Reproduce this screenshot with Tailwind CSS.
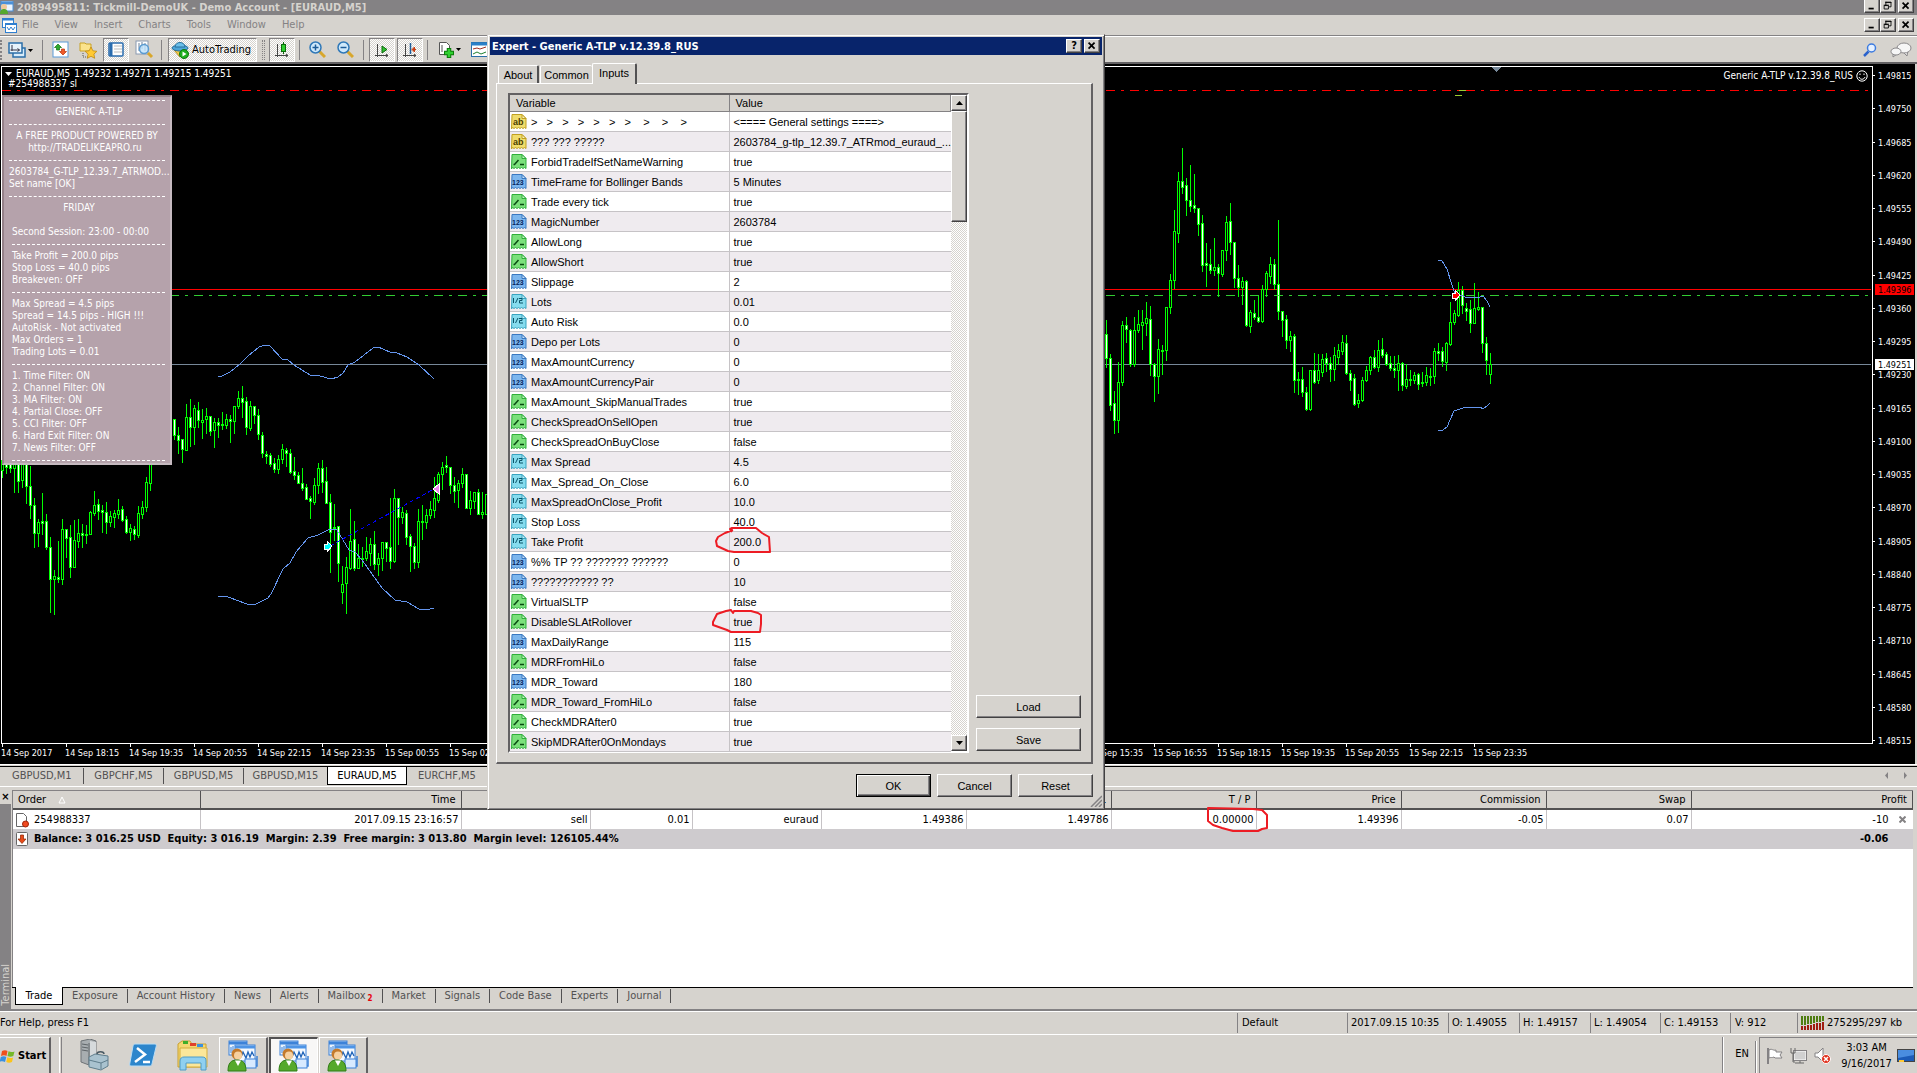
<!DOCTYPE html>
<html lang="en">
  <head>
    <meta charset="UTF-8" />
    <meta name="viewport" content="width=device-width, initial-scale=1.0" />
    <title>2089495811: Tickmill-DemoUK - Demo Account - [EURAUD,M5]</title>
    <script src="https://cdn.jsdelivr.net/npm/@tailwindcss/browser@4"></script>
  </head>
  <body class="relative flex min-h-screen flex-col overflow-hidden bg-[#d6d3ce] font-['DejaVu_Sans_Condensed','Noto_Sans',sans-serif] text-[11px] leading-[14px] text-black">
    <!-- Shared icons -->
    <svg class="hidden">
      <defs>
        <symbol id="page" viewBox="0 0 16 16">
          <path d="M1 .5h10l4 4v10l-1.500-1-1.500 1-1.500-1-1.500 1-1.500-1-1.500 1-1.500-1-1.500 1-1.500-1L.5 15z" />
          <path d="M11 .5v4h4z" fill="#fff" fill-opacity=".6" />
        </symbol>
        <symbol id="i-ab" viewBox="0 0 16 16">
          <use href="#page" fill="#f0dc6c" stroke="#c0a020" />
          <text x="2" y="11" font-size="9" font-weight="bold" fill="#4a3c00">ab</text>
        </symbol>
        <symbol id="i-bool" viewBox="0 0 16 16">
          <use href="#page" fill="#7be07b" stroke="#2fae3a" />
          <path d="M2.500 10.500h1l4-4.500M9 10.500h4" stroke="#084a10" stroke-width="1.500" fill="none" />
        </symbol>
        <symbol id="i-int" viewBox="0 0 16 16">
          <use href="#page" fill="#7db6ee" stroke="#3a78c0" />
          <text x="1" y="11" font-size="7" font-weight="bold" fill="#06245a">123</text>
        </symbol>
        <symbol id="i-dbl" viewBox="0 0 16 16">
          <use href="#page" fill="#86dcee" stroke="#39a3bf" />
          <path d="M2.500 4v5M4.500 9l2.500-5M8 4.500h3v2H8.500V9H12" stroke="#0b5468" fill="none" />
        </symbol>
        <symbol id="i-min" viewBox="0 0 16 14"><path d="M4 9h6v2H4z" /></symbol>
        <symbol id="i-restore" viewBox="0 0 16 14">
          <path d="M5.500 2v5M5 2.500h6.500V8H9M5 3h7M3.500 6.500h5v4h-5zM3 6h6" fill="none" stroke="#000" />
        </symbol>
        <symbol id="i-close" viewBox="0 0 16 14"><path d="M4 3l7 7M11 3l-7 7" stroke="#000" stroke-width="2" /></symbol>
        <symbol id="i-task" viewBox="0 0 32 32">
          <rect x="2" y="1" width="18" height="14" fill="#eaf4ff" stroke="#3c82d8" />
          <path d="M2 3h18" stroke="#3c82d8" stroke-width="3" />
          <path d="M4 7v6M6 6v5" stroke="#3c82d8" />
          <rect x="8" y="5" width="20" height="16" fill="#f4f9ff" stroke="#3c82d8" />
          <path d="M8 7h20" stroke="#4d94e6" stroke-width="3" />
          <path d="M14 17l2-5 3 6 2-6 2 5 2-5 2 4" stroke="#1f63b8" fill="none" stroke-width="1.300" />
          <path d="M19 24h10M30 16v10h-9" stroke="#3c82d8" fill="none" stroke-width="1.500" />
          <rect x="18" y="19" width="11" height="9" fill="#d8eaff" stroke="#3c82d8" />
          <circle cx="10" cy="14" r="5.500" fill="#c47a2c" />
          <circle cx="11" cy="15.500" r="4" fill="#f6d0a0" />
          <path d="M1 31c0-8 3-11 9-11s9 3 9 11z" fill="#55a92c" stroke="#2f7d14" />
          <path d="M8 20.500l3 5.500 3-5.500z" fill="#fff" />
        </symbol>
      </defs>
    </svg>

    <!-- Title bar -->
    <header class="flex h-[15px] items-center overflow-hidden bg-[#848284] pr-[3px] text-[#d6d3ce]">
      <svg class="mr-[3px] size-[14px]" viewBox="0 0 14 14">
        <rect x="1" width="12" height="10" fill="#eaf4ff" stroke="#4a90d8" />
        <path d="M1 2h12" stroke="#4a90d8" stroke-width="3" />
        <circle cx="4" cy="6" r="3" fill="#f0c89a" />
        <path d="M0 13c0-4 2-5 4-5s4 1 4 5z" fill="#55a92c" />
      </svg>
      <h1 class="flex-1 text-[11px] font-bold">2089495811: Tickmill-DemoUK - Demo Account - [EURAUD,M5]</h1>
      <div class="flex h-[13px] self-start">
        <button aria-label="Minimize" class="h-[13px] w-4 border border-t-0 border-white border-r-[#424142] border-b-[#424142] bg-[#d6d3ce] shadow-[inset_-1px_-1px_#848284]"><svg class="h-3 w-[14px]"><use href="#i-min" /></svg></button>
        <button aria-label="Restore" class="h-[13px] w-4 border border-t-0 border-white border-r-[#424142] border-b-[#424142] bg-[#d6d3ce] shadow-[inset_-1px_-1px_#848284]"><svg class="h-3 w-[14px]"><use href="#i-restore" /></svg></button>
        <button aria-label="Close" class="ml-0.5 h-[13px] w-4 border border-t-0 border-white border-r-[#424142] border-b-[#424142] bg-[#d6d3ce] shadow-[inset_-1px_-1px_#848284]"><svg class="h-3 w-[14px]"><use href="#i-close" /></svg></button>
      </div>
    </header>

    <!-- Menu -->
    <nav class="flex h-[21px] items-center border-b border-[#848284] pr-[3px] text-[#848284]">
      <svg class="mr-[5px] ml-0.5 size-[15px] flex-none" viewBox="0 0 15 15">
        <rect x=".5" y=".5" width="11" height="9" fill="#fff" stroke="#2f7fd0" />
        <path d="M0 1.500h12" stroke="#2f7fd0" stroke-width="2" />
        <rect x="3.500" y="5.500" width="11" height="9" fill="#fff" stroke="#2f7fd0" />
        <path d="M3 6.500h12M5 9l2 3 2-3 2 3 2-3" stroke="#2f7fd0" fill="none" />
      </svg>
      <div class="flex flex-1 gap-[16px]">
        <a href="#">File</a><a href="#">View</a><a href="#">Insert</a><a href="#">Charts</a><a href="#">Tools</a><a href="#">Window</a><a href="#">Help</a>
      </div>
      <button aria-label="Minimize chart" class="h-[14px] w-4 border border-white border-r-[#424142] border-b-[#424142] shadow-[inset_-1px_-1px_#848284]"><svg class="h-3 w-[14px]"><use href="#i-min" /></svg></button>
      <button aria-label="Restore chart" class="h-[14px] w-4 border border-white border-r-[#424142] border-b-[#424142] shadow-[inset_-1px_-1px_#848284]"><svg class="h-3 w-[14px]"><use href="#i-restore" /></svg></button>
      <button aria-label="Close chart" class="ml-0.5 h-[14px] w-4 border border-white border-r-[#424142] border-b-[#424142] shadow-[inset_-1px_-1px_#848284]"><svg class="h-3 w-[14px]"><use href="#i-close" /></svg></button>
    </nav>

    <!-- Toolbar -->
    <div class="flex h-[28px] items-center border-t border-b-2 border-t-white border-b-[#636163]">
      <span class="h-5 w-0.5 border-l-2 border-dotted border-[#848284]"></span>
      <button aria-label="New chart" class="ml-[6px]">
        <svg class="h-[18px] w-[26px]" viewBox="0 0 26 18">
          <rect x="5" y="7" width="12" height="9" fill="#d8ecfa" stroke="#2a6ea8" stroke-width="1.500" />
          <rect x="1" y="2" width="13" height="10" fill="#e6f3fc" stroke="#2a6ea8" stroke-width="1.500" />
          <path d="M4 4v6M2.500 9h9M9.500 7.500l2 1.500-2 1.500" stroke="#334" fill="none" />
          <path d="M20 8h5l-2.500 3z" />
        </svg>
      </button>
      <span class="ml-2 h-5 w-px bg-[#848284]"></span>
      <button aria-label="Market watch" class="ml-[9px]">
        <svg class="size-[17px]" viewBox="0 0 17 17">
          <rect x="1" y="1" width="15" height="15" fill="#fff" stroke="#5a9bd8" />
          <path d="M6 3l3.500 3.500h-2V9h-3V6.500h-2z" fill="#2eab2e" stroke="#137213" stroke-width=".7" />
          <path d="M11 14l3.500-3.500h-2V8h-3v2.500h-2z" fill="#f05a28" stroke="#b83208" stroke-width=".7" />
        </svg>
      </button>
      <button aria-label="Navigator" class="ml-[10px]">
        <svg class="size-[18px]" viewBox="0 0 18 18">
          <path d="M1 2h5l1 1h5v7H1z" fill="#fbe38c" stroke="#c9a227" />
          <path d="M4 12v4h5" stroke="#555" stroke-dasharray="1 1" fill="none" />
          <path d="M12 6l1.900 3.800 4 .5-3 2.800.8 4.200-3.700-2-3.700 2 .8-4.200-3-2.800 4-.5z" fill="#ffc933" stroke="#c08a10" stroke-width=".8" />
        </svg>
      </button>
      <button aria-label="Terminal" class="ml-[6px] flex h-6 w-[26px] items-center justify-center border border-[#848284] border-r-white border-b-white bg-[repeating-conic-gradient(#fff_0_25%,#d6d3ce_0_50%)] bg-[length:2px_2px]">
        <svg class="h-[15px] w-4" viewBox="0 0 16 15">
          <rect x="1" y="1" width="14" height="13" rx="1" fill="#fff" stroke="#2a6cae" stroke-width="1.500" />
          <path d="M3 1v13" stroke="#2a6cae" stroke-width="3" />
          <path d="M6 4h8M6 7h8M6 10h8" stroke="#bbb" />
        </svg>
      </button>
      <button aria-label="Strategy tester" class="ml-[6px]">
        <svg class="size-[19px]" viewBox="0 0 19 19">
          <rect x="1" y="1" width="12" height="13" fill="#fff" stroke="#8a9ab0" />
          <path d="M4 3v8M7 2v7M10 3v8" stroke="#68809c" />
          <circle cx="9" cy="9" r="4.500" fill="#bfe2fb" fill-opacity=".8" stroke="#5b9bd0" stroke-width="1.500" />
          <path d="M13 13l4 4" stroke="#d8a72c" stroke-width="3" />
        </svg>
      </button>
      <span class="ml-[7px] h-5 w-px bg-[#848284]"></span>
      <button class="ml-[6px] flex h-6 w-[89px] items-center gap-[3px] border border-[#848284] border-r-white border-b-white bg-[repeating-conic-gradient(#fff_0_25%,#d6d3ce_0_50%)] bg-[length:2px_2px] pl-[2px]">
        <svg class="size-[18px] flex-none" viewBox="0 0 18 18">
          <path d="M3 9l6 7 6-7z" fill="#f2c84a" stroke="#b58a12" />
          <ellipse cx="9" cy="7" rx="8" ry="3" fill="#4ea6d8" stroke="#256f9c" />
          <path d="M4 6c0-6 10-6 10 0z" fill="#6cc0ea" stroke="#256f9c" />
          <circle cx="13" cy="13" r="4.500" fill="#1fae1f" stroke="#0b7a0b" />
          <path d="M11.500 10.500l4 2.500-4 2.500z" fill="#fff" />
        </svg>
        AutoTrading
      </button>
      <span class="ml-[5px] h-5 w-[3px] border-x border-dotted border-[#848284]"></span>
      <button aria-label="Candlesticks" class="ml-[4px] flex h-6 w-[26px] items-center justify-center border border-[#848284] border-r-white border-b-white bg-[repeating-conic-gradient(#fff_0_25%,#d6d3ce_0_50%)] bg-[length:2px_2px]">
        <svg class="size-4" viewBox="0 0 16 16">
          <path d="M3.500 2v13M1 13.500h13M12 12l2 1.500-2 1.500" stroke="#444" fill="none" />
          <path d="M9.500 0v12" stroke="#0a6a0a" />
          <rect x="7.500" y="2.500" width="4" height="7" fill="#2fd02f" stroke="#0a6a0a" />
        </svg>
      </button>
      <span class="ml-1 h-5 w-px bg-[#848284]"></span>
      <button aria-label="Zoom in" class="ml-[9px]">
        <svg class="size-[17px]" viewBox="0 0 17 17">
          <path d="M10 10l6 6" stroke="#d8a72c" stroke-width="3" />
          <circle cx="6.500" cy="6.500" r="5.500" fill="#cfe9fb" stroke="#2f78b8" stroke-width="1.500" />
          <path d="M3.500 6.500h6M6.500 3.500v6" stroke="#1d5c98" stroke-width="1.500" />
        </svg>
      </button>
      <button aria-label="Zoom out" class="ml-[11px]">
        <svg class="size-[17px]" viewBox="0 0 17 17">
          <path d="M10 10l6 6" stroke="#d8a72c" stroke-width="3" />
          <circle cx="6.500" cy="6.500" r="5.500" fill="#cfe9fb" stroke="#2f78b8" stroke-width="1.500" />
          <path d="M3.500 6.500h6" stroke="#1d5c98" stroke-width="1.500" />
        </svg>
      </button>
      <span class="ml-[9px] h-5 w-px bg-[#848284]"></span>
      <button aria-label="Auto scroll" class="ml-[5px] flex h-6 w-[26px] items-center justify-center border border-[#848284] border-r-white border-b-white bg-[repeating-conic-gradient(#fff_0_25%,#d6d3ce_0_50%)] bg-[length:2px_2px]">
        <svg class="size-4" viewBox="0 0 16 16">
          <path d="M3.500 2v13M1 13.500h13M12 12l2 1.500-2 1.500" stroke="#444" fill="none" />
          <path d="M8 4l5 3.500L8 11z" fill="#2fc02f" stroke="#0a6a0a" />
        </svg>
      </button>
      <button aria-label="Chart shift" class="ml-[2px] flex h-6 w-[26px] items-center justify-center border border-[#848284] border-r-white border-b-white bg-[repeating-conic-gradient(#fff_0_25%,#d6d3ce_0_50%)] bg-[length:2px_2px]">
        <svg class="size-4" viewBox="0 0 16 16">
          <path d="M3.500 2v13M1 13.500h13M12 12l2 1.500-2 1.500" stroke="#444" fill="none" />
          <path d="M8.500 1v11" stroke="#1d5c98" stroke-width="1.500" />
          <path d="M14 7.500h-3M12.500 5L10 7.500l2.500 2.500z" fill="#c83c10" stroke="#c83c10" />
        </svg>
      </button>
      <span class="ml-1 h-5 w-px bg-[#848284]"></span>
      <button aria-label="Indicators" class="ml-[10px]">
        <svg class="h-[18px] w-6" viewBox="0 0 24 18">
          <path d="M1.500 1.500h7l3 3v9h-10z" fill="#fff" stroke="#555" />
          <path d="M4 4v7" stroke="#555" />
          <path d="M6 12h10M11 7v10" stroke="#0b7a0b" stroke-width="4.500" />
          <path d="M7 12h8M11 8v8" stroke="#2fd02f" stroke-width="2.500" />
          <path d="M18 7h5l-2.500 3z" />
        </svg>
      </button>
      <button aria-label="Templates" class="ml-[9px]">
        <svg class="h-[15px] w-[18px]" viewBox="0 0 18 15">
          <rect x=".5" y=".5" width="17" height="14" fill="#fff" stroke="#2a6ea8" />
          <path d="M0 2h18" stroke="#2a80c8" stroke-width="3" />
          <path d="M2 7l4-1 3 1 6-2" stroke="#a03020" fill="none" /><path d="M2 12l4-2 4 2 5-2" stroke="#208030" fill="none" />
        </svg>
      </button>
      <button aria-label="Search" class="mr-[13px] ml-auto">
        <svg class="size-[14px]" viewBox="0 0 14 14">
          <path d="M5.500 8.500L1 13" stroke="#2b62cc" stroke-width="2.500" />
          <circle cx="8.500" cy="5" r="4" fill="#e6f1ff" stroke="#3d7be0" stroke-width="1.500" />
        </svg>
      </button>
      <button aria-label="Messages" class="mr-[5px]">
        <svg class="h-[16px] w-[22px]" viewBox="0 0 22 16">
          <path d="M18 8l-1 6-4-4z" fill="#eee" stroke="#8a888a" />
          <ellipse cx="14" cy="6" rx="7" ry="5" fill="#f6f6f6" stroke="#8a888a" />
          <path d="M3 11v4l4-3z" fill="#eee" stroke="#8a888a" />
          <ellipse cx="6" cy="9.500" rx="5" ry="3.500" fill="#f6f6f6" stroke="#8a888a" />
        </svg>
      </button>
    </div>

    <!-- Chart window -->
    <main class="relative h-[700px] overflow-hidden border-r-2 border-[#d6d3ce] bg-black">
      <svg id="chart" class="absolute inset-0 h-full w-full text-[9px]" shape-rendering="crispEdges" fill="#fff"></svg>
      <div class="absolute top-[5px] left-[5px] text-[10px] leading-[10px] text-white">
        <p class="flex items-center gap-1"><svg class="h-1 w-[7px]" viewBox="0 0 7 4" fill="#fff"><path d="M0 0h7L3.500 4z" /></svg><span>EURAUD,M5</span><span>1.49232 1.49271 1.49215 1.49251</span></p>
        <p class="pl-[3px]">#254988337 sl</p>
      </div>
      <p class="absolute top-[5px] right-[47px] flex items-center gap-[3px] text-[10px] text-white">
        Generic A-TLP v.12.39.8_RUS
        <svg class="size-3" viewBox="0 0 12 12" fill="none" stroke="#fff"><circle cx="6" cy="6" r="5.200" /><path d="M3 7c1 3 5 3 6 0M4 3.500v1.500M8 3.500v1.500" /></svg>
      </p>
      <!-- EA info panel -->
      <section class="absolute top-[31px] left-[2px] w-[170px] border-2 border-[#948088] border-r-[#c6bac0] border-b-[#c6bac0] bg-[#b5a2ab] px-[5px] text-[10px] leading-3 whitespace-nowrap text-white">
        <hr class="mt-[3px] h-[6px] border-dashed border-white" />
        <p class="pl-1 text-center">GENERIC A-TLP</p>
        <hr class="mt-[6px] h-[6px] border-dashed border-white" />
        <p class="text-center">A FREE PRODUCT POWERED BY</p>
        <p class="pr-1 text-center">http://TRADELIKEAPRO.ru</p>
        <hr class="mt-[6px] h-[6px] border-dashed border-white" />
        <p>2603784_G-TLP_12.39.7_ATRMOD...</p>
        <p>Set name [OK]</p>
        <hr class="mt-[6px] h-[6px] border-dashed border-white" />
        <p class="pr-5 pl-1 text-center">FRIDAY</p>
        <p class="mt-3 pl-[3px]">Second Session: 23:00 - 00:00</p>
        <hr class="mt-[6px] ml-[3px] h-[6px] border-dashed border-white" />
        <div class="pl-[3px]">
          <p>Take Profit = 200.0 pips</p>
          <p>Stop Loss = 40.0 pips</p>
          <p>Breakeven: OFF</p>
        </div>
        <hr class="mt-[6px] ml-[3px] h-[6px] border-dashed border-white" />
        <div class="pl-[3px]">
          <p>Max Spread = 4.5 pips</p>
          <p>Spread = 14.5 pips - HIGH !!!</p>
          <p>AutoRisk - Not activated</p>
          <p>Max Orders = 1</p>
          <p>Trading Lots = 0.01</p>
        </div>
        <hr class="mt-[6px] ml-[3px] h-[6px] border-dashed border-white" />
        <div class="pl-[3px]">
          <p>1. Time Filter: ON</p>
          <p>2. Channel Filter: ON</p>
          <p>3. MA Filter: ON</p>
          <p>4. Partial Close: OFF</p>
          <p>5. CCI Filter: OFF</p>
          <p>6. Hard Exit Filter: ON</p>
          <p>7. News Filter: OFF</p>
        </div>
        <hr class="mt-[6px] ml-[3px] h-[3px] border-dashed border-white" />
      </section>
    </main>

    <!-- Chart tabs -->
    <nav class="flex h-[23px] items-start border-t border-b border-white text-[#525152]">
      <div class="mt-px flex h-5 flex-1 items-start border-t border-black pt-px leading-4">
        <a href="#" class="w-[84px] border-r border-[#525152] pl-3">GBPUSD,M1</a>
        <a href="#" class="w-20 border-r border-[#525152] text-center">GBPCHF,M5</a>
        <a href="#" class="w-20 border-r border-[#525152] text-center">GBPUSD,M5</a>
        <a href="#" class="w-[83px] text-center">GBPUSD,M15</a>
        <a href="#" class="-mt-px flex h-[18px] w-20 items-center justify-center border border-t-0 border-black bg-white text-black">EURAUD,M5</a>
        <a href="#" class="w-20 text-center">EURCHF,M5</a>
        <svg class="mt-1 mr-[10px] ml-auto h-[7px] w-[22px]" viewBox="0 0 22 7" fill="#848284"><path d="M3 0v7L0 3.500zM19 0v7l3-3.500z" /></svg>
      </div>
    </nav>

    <!-- Terminal -->
    <section class="flex flex-1 border-b-2 border-[#848284] pt-[3px]">
      <div class="flex w-[11px] flex-col">
        <button aria-label="Close terminal" class="h-[14px] text-[11px] leading-[10px] font-bold">×</button>
        <div class="flex flex-1 items-center justify-start bg-[#848284] text-[11px] leading-[11px] text-[#d6d3ce]">
          <span class="mt-auto mb-[3px] rotate-180 [writing-mode:vertical-rl]">Terminal</span>
        </div>
      </div>
      <div class="mr-[4px] ml-px flex flex-1 flex-col border-t border-[#848284]">
        <div class="flex-1 border-l border-[#848284] bg-white">
          <table class="w-full table-fixed border-collapse text-right">
            <colgroup>
              <col class="w-[187px]" /><col class="w-[261px]" /><col class="w-[129px]" /><col class="w-[102px]" /><col class="w-[129px]" /><col class="w-[145px]" /><col class="w-[145px]" /><col class="w-[145px]" /><col class="w-[145px]" /><col class="w-[145px]" /><col class="w-[145px]" /><col />
            </colgroup>
            <thead>
              <tr id="trade-head" class="h-[18px] bg-[#d6d3ce]"></tr>
            </thead>
            <tbody>
              <tr id="trade-row" class="h-5"></tr>
              <tr class="h-5 bg-[#cecbce] font-bold">
                <td colspan="11" class="p-0 text-left">
                  <span class="flex items-center gap-[5px] pl-0.5">
                    <svg class="h-[15px] w-3.5" viewBox="0 0 14 15"><rect x="1.500" y=".5" width="11" height="13" rx="1" fill="#fff" stroke="#666" /><path d="M5.500 3h3v4h2.500L7 11.500 3 7h2.500z" fill="#e84a18" stroke="#8a2200" stroke-width=".7" /></svg>
                    <span class="whitespace-pre">Balance: 3 016.25 USD  Equity: 3 016.19  Margin: 2.39  Free margin: 3 013.80  Margin level: 126105.44%</span>
                  </span>
                </td>
                <td class="p-0 pr-[24px]">-0.06</td>
              </tr>
            </tbody>
          </table>
        </div>
        <nav id="terminal-tabs" class="flex h-[22px] items-start border-t border-black text-[#525152]"></nav>
      </div>
    </section>

    <!-- Status bar -->
    <footer class="flex h-[24px] items-center border-t border-b border-white">
      <span class="flex-1">For Help, press F1</span>
      <span class="flex h-5 w-[110px] items-center border-l border-[#848284] pl-[4px]">Default</span>
      <span class="flex h-5 w-[101px] items-center border-l border-[#848284] pl-[3px] whitespace-nowrap">2017.09.15 10:35</span>
      <span class="flex h-5 w-[71px] items-center border-l border-[#848284] pl-[3px]">O: 1.49055</span>
      <span class="flex h-5 w-[71px] items-center border-l border-[#848284] pl-[3px]">H: 1.49157</span>
      <span class="flex h-5 w-[70px] items-center border-l border-[#848284] pl-[3px]">L: 1.49054</span>
      <span class="flex h-5 w-[70px] items-center border-l border-[#848284] pl-[3px]">C: 1.49153</span>
      <span class="flex h-5 w-[67px] items-center border-l border-[#848284] pl-[4px]">V: 912</span>
      <span class="flex h-5 w-[120px] items-center gap-[2px] border-l border-[#848284] pl-[3px] whitespace-nowrap">
        <svg class="h-[14px] w-6" viewBox="0 0 24 14" shape-rendering="crispEdges">
          <path d="M1 0v9M4 0v9M7 0v8M10 0v8M13 0v7M16 0v6M19 0v6M22 0v5" stroke="#4f7d10" stroke-width="2" />
          <path d="M1 10v4M4 10v4M7 9v5M10 9v5M13 8v6M16 7v7M19 7v7M22 6v8" stroke="#a01c10" stroke-width="2" />
        </svg>
        275295/297 kb
      </span>
    </footer>

    <!-- Taskbar -->
    <footer class="flex h-[38px] items-stretch pt-[2px]">
      <button class="flex w-[51px] items-center gap-0.5 border-t border-r-2 border-t-white border-r-[#636163] text-[11px] font-bold">
        <svg class="size-4 flex-none" viewBox="0 0 16 16">
          <path d="M2 3c2-1 4-1 5.500 0L6.500 8C5 7 3 7 1 8z" fill="#f0501c" /><path d="M8.500 3.300c2 1 4 1 6 .2L13.300 8c-2 1-4 .9-5.800 0z" fill="#76b82a" />
          <path d="M.8 9c2-1 4-1 5.500 0L5 14c-2-1-4-1-5.500 0z" fill="#3a90e0" /><path d="M7.300 9.300c2 1 4 1 5.800.2L12 14c-2 1-4 .9-5.700 0z" fill="#fbc41a" />
        </svg>
        Start
      </button>
      <span class="ml-2 w-[3px] border-x border-l-white border-r-[#848284]"></span>
      <button aria-label="Server Manager" class="ml-[16px]">
        <svg class="size-8" viewBox="0 0 32 32">
          <path d="M3 2l9-2 6 2v20l-7 4-8-3z" fill="#a8adb0" stroke="#6e7377" /><path d="M11 4v21M4 5l6 1M4 8l6 1M4 11l6 1" stroke="#5e6468" />
          <path d="M12 2l6 1v19l-6 3z" fill="#d6dadc" />
          <path d="M19 15c0-3 7-3 7 0" stroke="#4a5a64" stroke-width="1.500" fill="none" />
          <path d="M11 18l6-3 13 2v10l-7 4-12-3z" fill="#a9c2cf" stroke="#5f7d8c" /><path d="M11 21l12 3 7-3M23 24v6" stroke="#5f7d8c" fill="none" />
        </svg>
      </button>
      <button aria-label="PowerShell" class="ml-[19px]">
        <svg class="size-7" viewBox="0 0 28 28">
          <path d="M6 3h20c1 0 1.500 1 1.300 2L23 23c-.3 1-1 2-2 2H2c-1 0-1.500-1-1.300-2L4 5c.3-1 1-2 2-2z" fill="#2d86cc" stroke="#b9dcf4" />
          <path d="M8 7l8 6.500L6 21M14 21h7" stroke="#fff" stroke-width="2.500" fill="none" />
        </svg>
      </button>
      <button aria-label="Explorer" class="ml-[20px]">
        <svg class="size-8" viewBox="0 0 32 32">
          <path d="M1 5l4-3h8l2 3h14v23H1z" fill="#f4d772" stroke="#c9a030" /><path d="M6 5V2h5v3z" fill="#3fae2a" /><path d="M13 7V4h6v3z" fill="#e0402a" /><path d="M20 8V5h6v3z" fill="#3a90e0" />
          <path d="M3 9h27v19H3z" fill="#fbe79a" stroke="#d4ae3c" />
          <path d="M3 31v-9c0-3 2-4 4-4h18c3 0 4 1 4 4v9h-5v-7H9v7z" fill="#8fd0f0" stroke="#4f9cc8" />
        </svg>
      </button>
      <button aria-label="Tickmill 1" class="ml-[10px] flex w-[49px] items-center justify-center border-t border-r-2 border-l border-white border-r-[#636163]"><svg class="size-8"><use href="#i-task" /></svg></button>
      <button aria-label="Tickmill 2" class="ml-px flex w-[49px] items-center justify-center border-t-2 border-r border-l-2 border-[#525152] border-r-white bg-[#f8f7f6]"><svg class="size-8"><use href="#i-task" /></svg></button>
      <button aria-label="Tickmill 3" class="ml-px flex w-[49px] items-center justify-center border-t border-r-2 border-l border-white border-r-[#636163]"><svg class="size-8"><use href="#i-task" /></svg></button>
      <span class="flex-1"></span>
      <span class="w-[2px] border-r border-l border-l-[#848284] border-r-white"></span>
      <span class="mt-[2px] flex w-[31px] items-center justify-end pr-[6px] pb-1">EN</span>
      <span class="mt-1 w-[2px] border-r border-l border-l-[#848284] border-r-white"></span>
      <div class="ml-0.5 flex w-[158px] items-center border-t border-l border-[#848284] pr-[2px] pl-[6px]">
        <svg class="h-[18px] w-[17px]" viewBox="0 0 17 18"><path d="M2 1v16" stroke="#848284" stroke-width="2" /><path d="M3 3c3-2 4 1 7 0v2h6l-2 3 2 3H9l-1-1c-2 1-3 0-5 1z" fill="#fff" stroke="#848284" /></svg>
        <svg class="ml-[7px] h-[18px] w-[17px]" viewBox="0 0 17 18"><rect x="4" y="4" width="12" height="9" fill="#d0d0d0" stroke="#fff" /><rect x="3.500" y="3.500" width="13" height="10" fill="none" stroke="#848284" /><path d="M5 16h9M10 14v2M1 1v5h4V1M3 6v9h2" stroke="#666" fill="none" /></svg>
        <svg class="ml-[7px] h-[18px] w-[17px]" viewBox="0 0 17 18"><path d="M1 6h3l5-5v14l-5-5H1z" fill="#fff" stroke="#848284" /><circle cx="12" cy="12" r="4.500" fill="#e0301c" stroke="#fff" /><path d="M10 10l4 4M14 10l-4 4" stroke="#fff" stroke-width="1.500" /></svg>
        <p class="flex-1 pl-[5px] text-center leading-4">3:03 AM<br />9/16/2017</p>
        <svg class="h-4 w-[18px]" viewBox="0 0 18 16"><rect x=".5" y="1.500" width="17" height="12" fill="#1c5cb8" stroke="#444" /><path d="M1 2h16v5L1 10z" fill="#4a8ee0" /><path d="M2 13h5" stroke="#ffc933" stroke-width="2" /></svg>
      </div>
    </footer>

    <!-- Expert properties dialog -->
    <div role="dialog" aria-label="Expert - Generic A-TLP v.12.39.8_RUS" class="absolute top-[34px] left-[487px] w-[618px] border border-[#d6d3ce] border-r-[#424142] border-b-[#424142] bg-[#d6d3ce] p-[2px] font-['Liberation_Sans',sans-serif] shadow-[inset_1px_1px_#fff,inset_-1px_-1px_#848284]">
      <div class="flex h-[18px] items-center bg-[#08246b] px-[2px] font-['DejaVu_Sans_Condensed','Noto_Sans',sans-serif] font-bold text-white">
        <h2 class="flex-1 pt-px">Expert - Generic A-TLP v.12.39.8_RUS</h2>
        <button aria-label="Help" class="flex h-[14px] w-4 items-center justify-center border border-white border-r-[#424142] border-b-[#424142] bg-[#d6d3ce] text-black shadow-[inset_-1px_-1px_#848284]">?</button>
        <button aria-label="Close dialog" class="ml-[2px] h-[14px] w-4 border border-white border-r-[#424142] border-b-[#424142] bg-[#d6d3ce] shadow-[inset_-1px_-1px_#848284]"><svg class="h-3 w-[14px]"><use href="#i-close" /></svg></button>
      </div>
      <div class="mt-2 flex items-end pl-[8px]">
        <button class="h-[18px] w-[41px] rounded-t-[2px] border-t border-r-2 border-l border-white border-r-[#525152]">About</button>
        <button class="ml-px h-[18px] w-[52px] rounded-t-[2px] border-t border-l border-white">Common</button>
        <button class="relative -mb-px h-[21px] w-[45px] rounded-t-[2px] border-t border-r-2 border-l border-white border-r-[#525152] bg-[#d6d3ce] pb-[2px]">Inputs</button>
      </div>
      <div class="mr-[9px] ml-[6px] flex border border-r-2 border-b-2 border-white border-r-[#636163] border-b-[#636163] pt-[9px] pr-[10px] pb-[9px] pl-[11px]">
        <div class="flex h-[660px] w-[461px] border-2 border-[#636163] border-r-white border-b-white bg-white">
          <table class="w-[441px] table-fixed border-collapse">
            <thead>
              <tr class="h-4 bg-[#d6d3ce] text-left">
                <th class="w-[219px] border-r border-b border-[#848284] p-0 pt-px pl-[6px] font-normal">Variable</th>
                <th class="border-r border-b border-[#848284] p-0 pt-px pl-[6px] font-normal">Value</th>
              </tr>
            </thead>
            <tbody id="inputs"></tbody>
          </table>
          <div class="flex w-4 flex-col bg-[repeating-conic-gradient(#fff_0_25%,#d6d3ce_0_50%)] bg-[length:2px_2px]">
            <button aria-label="Scroll up" class="flex h-4 items-center justify-center border border-white border-r-[#424142] border-b-[#424142] bg-[#d6d3ce] shadow-[inset_-1px_-1px_#848284]"><svg class="h-1 w-[7px]" viewBox="0 0 7 4"><path d="M0 4h7L3.500 0z" /></svg></button>
            <div class="h-[111px] border border-white border-r-[#424142] border-b-[#424142] bg-[#d6d3ce] shadow-[inset_-1px_-1px_#848284]"></div>
            <button aria-label="Scroll down" class="mt-auto flex h-4 items-center justify-center border border-white border-r-[#424142] border-b-[#424142] bg-[#d6d3ce] shadow-[inset_-1px_-1px_#848284]"><svg class="h-1 w-[7px]" viewBox="0 0 7 4"><path d="M0 0h7L3.500 4z" /></svg></button>
          </div>
        </div>
        <div class="ml-[7px] flex flex-1 flex-col justify-end gap-[10px] pb-[2px]">
          <button class="h-[23px] border border-white border-r-[#424142] border-b-[#424142] shadow-[inset_-1px_-1px_#848284]">Load</button>
          <button class="h-[23px] border border-white border-r-[#424142] border-b-[#424142] shadow-[inset_-1px_-1px_#848284]">Save</button>
        </div>
      </div>
      <div class="flex justify-end gap-[6px] pt-[10px] pr-[9px] pb-[10px]">
        <button class="h-[23px] w-[75px] border border-black shadow-[inset_1px_1px_#fff,inset_-1px_-1px_#424142,inset_-2px_-2px_#848284]">OK</button>
        <button class="h-[23px] w-[75px] border border-white border-r-[#424142] border-b-[#424142] shadow-[inset_-1px_-1px_#848284]">Cancel</button>
        <button class="h-[23px] w-[75px] border border-white border-r-[#424142] border-b-[#424142] shadow-[inset_-1px_-1px_#848284]">Reset</button>
      </div>
      <svg class="absolute right-0.5 bottom-0.5 size-3" viewBox="0 0 12 12"><path d="M1 12L12 1M5 12l7-7M9 12l3-3" stroke="#848284" stroke-width="1.500" /></svg>
    </div>

    <!-- Pen marks -->
    <svg class="pointer-events-none absolute inset-0 h-full w-full" fill="none" stroke="#ed1c24" stroke-width="2" stroke-linejoin="round">
      <path d="M732 532l-2-3 2-1h24l6 5 7 4 1 15h-36l-6-1-11-5-1-5 2-4 7-4 8-3" />
      <path d="M733 613l1-2h17l7 2 3 2v9l-1 8h-29l-4-2-14-5v-3l4-8 9-3 5-1z" />
      <path d="M1208 808v13l5 4 9 3 11 3h25l4-2 5-1v-13l-5-5-9-1z" />
    </svg>

    <script>
      // [wick top, body top, body bottom, wick bottom, falling]
      const left = [
        [460,460,470,477,0],[460,460,467,473,1],[460,460,468,472,1],[460,460,468,492,0],[460,460,481,492,1],[460,460,480,487,0],[460,460,486,503,1],[466,486,505,518,1],
        [498,505,533,547,1],[519,522,533,546,0],[493,521,523,534,1],[514,521,547,549,1],[537,547,579,612,1],[570,576,579,614,0],[541,577,579,582,1],[519,529,579,584,0],
        [529,529,538,557,1],[525,537,567,577,1],[520,540,567,567,0],[519,533,541,547,0],[524,533,535,547,1],[525,534,535,543,1],[511,512,534,534,0],[491,505,513,515,0],
        [499,504,511,519,1],[505,510,512,532,1],[502,512,522,533,1],[511,516,522,526,0],[510,513,517,527,0],[499,510,514,518,0],[506,509,520,521,1],[516,519,532,533,1],
        [524,528,532,540,0],[526,529,534,539,1],[506,513,535,537,0],[501,507,514,518,0],[477,482,507,511,0],[460,460,483,490,0],null,null,null,null,null,
        [419,419,435,439,1],[427,435,440,453,1],[439,439,449,462,1],[404,417,450,450,0],[399,417,427,446,1],[405,408,427,444,0],[402,410,420,427,1],[409,420,422,438,0],
        [408,416,419,433,0],[416,416,431,435,1],[418,422,430,447,0],[418,422,425,437,1],[412,424,425,429,0],[414,419,425,428,0],[415,419,421,442,1],[406,406,421,433,0],
        [391,398,406,408,0],[386,398,402,417,1],[397,401,427,434,1],[401,406,428,430,0],[406,406,415,423,1],[409,415,434,439,1],[432,435,453,457,1],[451,454,456,463,1],
        [453,455,464,466,1],[458,463,469,472,1],[455,459,469,473,0],[444,449,459,463,0],[448,450,453,466,1],[449,453,472,473,1],[457,471,475,479,1],[472,475,483,483,1],
        [468,483,488,490,1],[484,487,499,499,1],[496,498,501,518,1],[478,485,502,504,0],[463,468,485,493,0],[460,468,482,492,1],[467,481,503,503,1],[494,502,532,572,1],
        [504,527,528,540,1],[526,526,563,581,1],[566,584,592,603,0],[557,567,583,613,0],[509,541,568,569,0],[521,539,568,570,1],[544,558,568,568,0],[547,558,559,566,0],
        [537,551,558,560,0],[538,544,553,565,0],[531,544,564,569,1],[553,558,564,575,0],[542,542,558,570,0],[542,542,548,561,1],[498,547,561,568,1],[489,498,561,562,0],
        [498,498,517,544,1],[507,512,517,523,0],[510,513,537,544,1],[534,536,546,571,1],[543,546,562,568,1],[509,521,562,567,0],[505,521,522,539,0],[509,515,522,528,0],
        [501,509,515,518,0],[477,498,510,517,0],[472,474,500,502,0],[462,467,474,489,0],[456,465,467,472,1],[467,467,485,493,1],[477,485,491,502,1],[480,483,490,507,0],
        [468,474,483,487,0],[474,474,508,508,1],[491,500,508,514,0],[492,492,501,508,0],[489,492,514,514,1],[492,512,514,518,0],[494,494,514,514,0]
      ];
      const right = [
        [320,334,358,367,1],[354,358,405,410,1],[391,403,420,433,1],[362,382,420,432,0],[321,325,382,385,0],[317,325,329,342,1],[329,330,364,366,1],[317,330,364,366,0],
        [310,324,330,332,0],[310,322,325,349,0],[302,318,323,335,0],[306,319,364,375,1],[363,364,376,401,1],[339,349,376,393,0],[345,350,351,374,0],[307,307,350,360,0],
        [274,280,307,313,0],[210,231,280,288,0],[172,181,233,242,0],[148,181,187,193,1],[178,185,200,215,1],[165,200,206,211,1],[174,205,208,212,1],[208,208,224,235,1],
        [215,223,265,271,1],[243,263,265,286,1],[249,264,270,273,1],[238,267,270,275,0],[264,267,273,296,1],[250,250,274,276,0],[216,222,250,260,0],[203,221,242,254,1],
        [242,242,278,287,1],[265,278,287,296,1],[277,281,287,304,0],[280,281,325,326,1],[310,312,326,332,0],[300,313,317,319,1],[296,317,321,322,1],[285,289,321,322,0],
        [271,273,289,296,0],[257,264,276,283,0],[259,264,284,289,1],[220,284,311,319,1],[311,311,320,336,1],[315,319,340,348,1],[331,336,340,351,0],[334,336,380,392,1],
        [372,379,380,394,0],[367,379,392,396,1],[387,392,409,410,1],[370,370,409,410,0],[353,370,382,383,1],[354,370,380,383,0],[354,359,372,376,0],[353,358,363,371,1],
        [357,363,369,381,1],[347,355,369,380,0],[344,350,357,364,0],[335,342,351,354,0],[335,343,373,374,1],[370,373,380,390,1],[374,378,404,405,1],[394,400,403,407,0],
        [377,380,400,401,0],[366,370,380,381,0],[356,357,370,374,0],[350,357,367,368,1],[340,350,367,371,0],[338,349,355,357,1],[352,354,364,365,1],[356,363,368,370,1],
        [356,368,370,377,1],[355,363,370,390,0],[362,363,385,390,1],[364,379,386,388,0],[370,379,380,385,0],[372,375,380,383,0],[373,374,384,389,1],[372,382,383,386,0],
        [367,375,382,385,0],[368,376,377,385,0],[348,351,376,383,0],[343,351,353,360,1],[347,351,361,366,1],[342,343,362,370,0],[302,322,344,345,0],[310,313,322,324,0],
        [282,290,315,316,0],[286,290,305,313,1],[303,308,311,320,1],[300,309,323,332,1],[283,308,323,323,0],[292,307,309,310,0],[307,307,343,352,1],[337,343,360,374,1],
        [353,364,374,383,0]
      ];
      const offsetY = 64;

      function candles(list, x0) {
        return list
          .map((c, i) => {
            if (!c) return "";
            const [h, a, b, l] = c.slice(0, 4).map((v) => v - offsetY);
            const x = x0 + i * 4;
            let s = `<rect x="${x}" y="${h}" width="1" height="${l - h + 1}" fill="#0f0"/><rect x="${x - 1}" y="${a}" width="3" height="${b - a + 1}" fill="#0f0"/>`;
            if (b - a > 1) s += `<rect x="${x}" y="${a + 1}" width="1" height="${b - a - 1}" fill="${c[4] ? "#fff" : "#000"}"/>`;
            return s;
          })
          .join("");
      }

      function line(y, color, dash) {
        return `<line x1="2" x2="1871" y1="${y}.5" y2="${y}.5" stroke="${color}" stroke-dasharray="${dash}"/>`;
      }

      function band(points) {
        return `<polyline points="${points}" fill="none" stroke="#6495ed" stroke-width="1"/>`;
      }

      // price scale
      let scale = "";
      for (let i = 0; i <= 20; i++) {
        const y = Math.round(75 + i * 33.25) - offsetY;
        scale += `<rect x="1873" y="${y}" width="2" height="1"/><text x="1878" y="${y + 4}">${(1.49815 - i * 0.00065).toFixed(5)}</text>`;
      }

      // time scale
      const times = ["14 Sep 2017","14 Sep 18:15","14 Sep 19:35","14 Sep 20:55","14 Sep 22:15","14 Sep 23:35","15 Sep 00:55","15 Sep 02:15","15 Sep 03:35","15 Sep 04:55","15 Sep 06:15","15 Sep 07:35","15 Sep 08:55","15 Sep 10:15","15 Sep 11:35","15 Sep 12:55","15 Sep 14:15","15 Sep 15:35","15 Sep 16:55","15 Sep 18:15","15 Sep 19:35","15 Sep 20:55","15 Sep 22:15","15 Sep 23:35"];
      times.forEach((t, i) => {
        const x = 2 + i * 64;
        scale += `<rect x="${x}" y="680" width="1" height="3"/><text x="${x - 1}" y="692">${t}</text>`;
      });

      document.getElementById("chart").innerHTML =
        `<rect x="1" y="2" width="1872" height="1"/><rect x="1" y="2" width="1" height="678"/><rect x="1872" y="2" width="1" height="678"/><rect x="1" y="679" width="1872" height="1"/>` +
        line(300, "#778899", "none") +
        line(225, "#ff0000", "none") +
        candles(left, 2) +
        candles(right, 1106) +
        line(231, "#32cd32", "9 6 3 6") +
        line(26, "#ff0000", "9 6 3 6") +
        band("218,312 222,312 230,308 240,300 248,292 259,283 265,281 270,282 282,295 288,296 294,301 310,311 320,312 331,315 338,313 343,309 348,301 355,298 373,284 378,283 390,288 397,289 407,293 419,301 434,315") +
        band("218,532 228,533 247,540 254,541 268,534 271,530 283,505 290,499 296,488 308,474 318,471 330,465 337,466 343,476 349,486 355,488 362,496 382,524 395,536 407,538 419,545 430,545 434,544") +
        band("1438,196 1442,197 1447,205 1451,218 1454,227 1457,231 1463,232 1467,234 1480,233 1483,232 1487,237 1490,243") +
        band("1438,366 1443,366 1447,363 1454,347 1463,344 1480,343 1483,345 1487,342 1490,339") +
        `<line x1="330" y1="482" x2="434" y2="425" stroke="#00f" stroke-dasharray="4 3"/>` +
        `<path d="M433 425l6-5v10z" fill="#ee82ee" stroke="#fff" stroke-width="1"/>` +
        `<path d="M324 480h3v-3l5 5-5 6v-3h-3z" fill="#0ff" stroke="#fff"/>` +
        `<path d="M1452 229h3v-3l5 5-5 6v-3h-3z" fill="#f00" stroke="#fff"/>` +
        `<rect x="1455" y="31" width="7" height="1" fill="#9acd32"/><rect x="1459" y="26" width="7" height="1" fill="#9acd32"/>` +
        `<path d="M1492 3h9l-4.500 5z" fill="#778899"/>` +
        scale +
        `<rect x="1875" y="220" width="39" height="11" fill="#f00"/><text x="1878" y="229" fill="#000">1.49396</text>` +
        `<rect x="1875" y="295" width="39" height="11"/><text x="1878" y="304" fill="#000">1.49251</text>`;

      // expert inputs: icon, variable, value
      const inputs = [
        ["ab", ">   >   >   >   >   >   >    >    >    >", "<==== General settings ====>"],
        ["ab", "??? ??? ?????", "2603784_g-tlp_12.39.7_ATRmod_euraud_..."],
        ["bool", "ForbidTradeIfSetNameWarning", "true"],
        ["int", "TimeFrame for Bollinger Bands", "5 Minutes"],
        ["bool", "Trade every tick", "true"],
        ["int", "MagicNumber", "2603784"],
        ["bool", "AllowLong", "true"],
        ["bool", "AllowShort", "true"],
        ["int", "Slippage", "2"],
        ["dbl", "Lots", "0.01"],
        ["dbl", "Auto Risk", "0.0"],
        ["int", "Depo per Lots", "0"],
        ["int", "MaxAmountCurrency", "0"],
        ["int", "MaxAmountCurrencyPair", "0"],
        ["bool", "MaxAmount_SkipManualTrades", "true"],
        ["bool", "CheckSpreadOnSellOpen", "true"],
        ["bool", "CheckSpreadOnBuyClose", "false"],
        ["dbl", "Max Spread", "4.5"],
        ["dbl", "Max_Spread_On_Close", "6.0"],
        ["dbl", "MaxSpreadOnClose_Profit", "10.0"],
        ["dbl", "Stop Loss", "40.0"],
        ["dbl", "Take Profit", "200.0"],
        ["int", "%% TP ?? ??????? ??????", "0"],
        ["int", "??????????? ??", "10"],
        ["bool", "VirtualSLTP", "false"],
        ["bool", "DisableSLAtRollover", "true"],
        ["int", "MaxDailyRange", "115"],
        ["bool", "MDRFromHiLo", "false"],
        ["int", "MDR_Toward", "180"],
        ["bool", "MDR_Toward_FromHiLo", "false"],
        ["bool", "CheckMDRAfter0", "true"],
        ["bool", "SkipMDRAfter0OnMondays", "true"]
      ];
      const esc = (s) => s.replace(/</g, "&lt;").replace(/>/g, "&gt;");
      document.getElementById("inputs").innerHTML = inputs
        .map(
          ([icon, name, value]) =>
            `<tr class="h-5 even:bg-[#efebef]"><td class="border-r border-b border-[#c6c3c6] p-0 pl-px"><span class="flex h-[19px] items-center gap-1 pt-[2px] whitespace-pre"><svg class="size-4 flex-none"><use href="#i-${icon}"/></svg>${esc(name)}</span></td><td class="border-b border-[#c6c3c6] p-0 pt-[2px] pl-1 whitespace-nowrap">${esc(value)}</td></tr>`
        )
        .join("");

      // open positions
      const heads = ["Order", "Time", "Type", "Size", "Symbol", "Price", "S / L", "T / P", "Price", "Commission", "Swap", "Profit"];
      document.getElementById("trade-head").innerHTML = heads
        .map((h, i) =>
          i === 0
            ? `<th class="border-r border-b-2 border-[#525152] p-0 pt-px pl-[5px] text-left font-normal"><span class="flex items-center gap-3">${h}<svg class="size-2" viewBox="0 0 8 8"><path d="M4 1L1 7h6z" fill="none" stroke="#fff"/></svg></span></th>`
            : `<th class="border-r border-b-2 border-[#525152] p-0 pt-px pr-[5px] font-normal">${h}</th>`
        )
        .join("");
      const order = ["254988337", "2017.09.15 23:16:57", "sell", "0.01", "euraud", "1.49386", "1.49786", "0.00000", "1.49396", "-0.05", "0.07", "-10"];
      document.getElementById("trade-row").innerHTML = order
        .map((v, i) => {
          if (i === 0)
            return `<td class="border-r border-[#c6c3c6] p-0 pl-0.5 text-left"><span class="flex items-center gap-[5px]"><svg class="h-4 w-3.5" viewBox="0 0 14 16"><path d="M1.500 1.500h7l3 3v10h-10z" fill="#fff" stroke="#666"/><circle cx="10.500" cy="12" r="3" fill="#f04a20" stroke="#a02408"/></svg>${v}</span></td>`;
          if (i === 11)
            return `<td class="p-0 pr-[7px]"><span class="flex items-center justify-end gap-[10px]">${v}<svg class="size-[7px]" viewBox="0 0 7 7"><path d="M0.500 0.500l6 6M6.500 .5l-6 6" stroke="#848284" stroke-width="2"/></svg></span></td>`;
          return `<td class="border-r border-[#c6c3c6] p-0 pr-[2px]">${v}</td>`;
        })
        .join("");

      const tabs = ["Trade", "Exposure", "Account History", "News", "Alerts", "Mailbox", "Market", "Signals", "Code Base", "Experts", "Journal"];
      document.getElementById("terminal-tabs").innerHTML = tabs
        .map((t, i) =>
          i === 0
            ? `<a href="#" class="-mt-px ml-[3px] flex h-[18px] w-[48px] items-center justify-center border border-t-0 border-black bg-white text-black">${t}</a>`
            : `<a href="#" class="mt-px border-r border-[#525152] pr-[9px] pl-[9px]">${t}${t === "Mailbox" ? '<sub class="pl-[2px] text-[8px] leading-none font-bold text-red-600">2</sub>' : ""}</a>`
        )
        .join("");
    </script>
  </body>
</html>
